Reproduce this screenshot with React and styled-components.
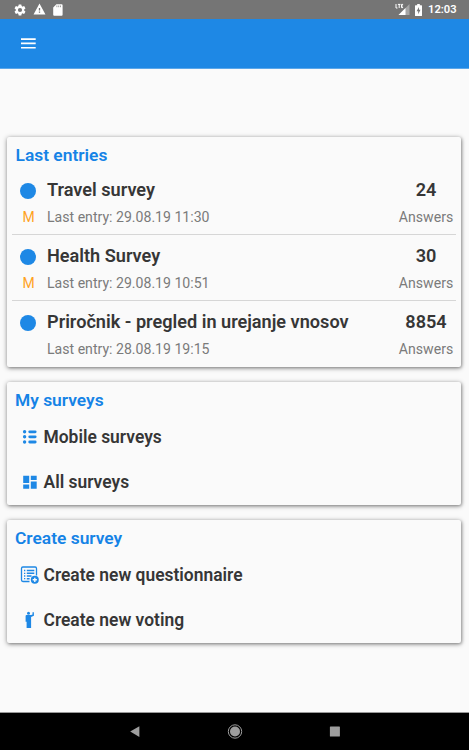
import React from "react";
import styled, { createGlobalStyle } from "styled-components";

const colors = {
    primary: "#1e88e5",
    heading: "#1583e6",
    text: "#363636",
    muted: "#7b7b7b",
    accent: "#ffa21f",
    background: "#fafafa",
    statusBar: "#757575",
};

const entries = [
    { title: "Travel survey", date: "29.08.19 11:30", answers: 24, mobile: true },
    { title: "Health Survey", date: "29.08.19 10:51", answers: 30, mobile: true },
    { title: "Priročnik - pregled in urejanje vnosov", date: "28.08.19 19:15", answers: 8854, mobile: false },
];

const GlobalStyle = createGlobalStyle`
    * {
        box-sizing: border-box;
    }

    body {
        margin: 0;
        background: ${colors.background};
        font-family: Roboto, "Noto Sans", sans-serif;
    }
`;

const Screen = styled.div`
    display: flex;
    flex-direction: column;
    height: 750px;
    overflow: hidden;
`;

const StatusBar = styled.header`
    display: flex;
    justify-content: space-between;
    align-items: center;
    height: 19px;
    padding: 0 13px 0 13px;
    background: ${colors.statusBar};
    color: #fff;

    & svg {
        display: block;
    }
`;

const StatusGroup = styled.div`
    display: flex;
    align-items: center;
    gap: ${(props) => props.$gap}px;
`;

const Clock = styled.span`
    font-size: 11.2px;
    font-weight: 600;
    line-height: 19px;
    width: 28px;
    margin-left: 1px;
    white-space: nowrap;
`;

const AppBar = styled.div`
    display: flex;
    align-items: center;
    height: 50px;
    padding-left: 21px;
    background: ${colors.primary};
    border-bottom: 1px solid #5ba7ea;
`;

const MenuButton = styled.button`
    display: flex;
    padding: 0;
    border: 0;
    background: none;
`;

const Content = styled.main`
    flex: 1;
    display: flex;
    flex-direction: column;
    gap: 15px;
    padding: 68px 8px 0 7px;
`;

const Card = styled.section`
    border-radius: 2px;
    background: ${colors.background};
    box-shadow: 0 1px 5px rgba(0, 0, 0, 0.42), 1px 1px 3px rgba(0, 0, 0, 0.22);
`;

const CardTitle = styled.h2`
    height: ${(props) => props.$height || 33}px;
    margin: 0;
    padding-left: ${(props) => props.$indent || 8}px;
    font-size: 17.4px;
    font-weight: 600;
    line-height: 37px;
    color: ${colors.heading};
`;

const Entry = styled.div`
    display: grid;
    grid-template-columns: 30px 1fr 60px;
    grid-template-rows: 41px 25px;
    height: 66px;
    margin: 0 5px 0 5px;
    border-bottom: 1px solid #d6d6d6;

    &:last-child {
        border-bottom: 0;
    }
`;

const Dot = styled.span`
    width: 16px;
    height: 16px;
    margin: 14px 0 0 8px;
    border-radius: 50%;
    background: ${colors.primary};
`;

const EntryTitle = styled.div`
    padding-left: 5px;
    font-size: 18.14px;
    font-weight: 600;
    line-height: 42px;
    white-space: nowrap;
    color: ${colors.text};
`;

const Count = styled(EntryTitle)`
    padding-left: 0;
    text-align: center;
`;

const Mark = styled.div`
    padding-left: 3px;
    font-size: 14px;
    line-height: 15px;
    text-align: center;
    color: ${colors.accent};
`;

const Detail = styled.div`
    padding-left: 5px;
    font-size: 14.1px;
    line-height: 15px;
    white-space: nowrap;
    color: ${colors.muted};
`;

const AnswersLabel = styled(Detail)`
    padding-left: 0;
    text-align: center;
`;

const MenuItem = styled.div`
    display: flex;
    align-items: center;
    height: 45px;
    padding-left: 13px;
    font-size: 17.43px;
    font-weight: 600;
    line-height: 45px;
    color: ${colors.text};

    & svg {
        width: 20px;
        height: 20px;
        margin-right: 3.5px;
        color: ${colors.primary};
    }
`;

const NavBar = styled.nav`
    display: flex;
    align-items: center;
    justify-content: center;
    gap: 80px;
    height: 38px;
    background: #000;
    border-top: 1px solid #999;
`;

const SettingsIcon = () => (
    <svg width="14" height="14" viewBox="0 0 24 24" fill="currentColor">
        <path d="M19.14 12.94c.04-.3.06-.61.06-.94 0-.32-.02-.64-.07-.94l2.03-1.58a.49.49 0 0 0 .12-.61l-1.92-3.32a.49.49 0 0 0-.59-.22l-2.39.96a7 7 0 0 0-1.62-.94l-.36-2.54a.48.48 0 0 0-.48-.41h-3.84a.48.48 0 0 0-.47.41l-.36 2.54c-.59.24-1.13.57-1.62.94l-2.39-.96a.48.48 0 0 0-.59.22L2.74 8.87a.48.48 0 0 0 .12.61l2.03 1.58a6 6 0 0 0-.02 1.88l-2.03 1.58a.49.49 0 0 0-.12.61l1.92 3.32c.12.22.37.29.59.22l2.39-.96c.5.38 1.03.7 1.62.94l.36 2.54c.05.24.24.41.48.41h3.84c.24 0 .44-.17.47-.41l.36-2.54a7 7 0 0 0 1.62-.94l2.39.96c.22.08.47 0 .59-.22l1.92-3.32a.48.48 0 0 0-.12-.61zM12 15.6a3.6 3.6 0 1 1 0-7.2 3.6 3.6 0 0 1 0 7.2z" />
    </svg>
);

const WarningIcon = () => (
    <svg width="13" height="13" viewBox="0 0 24 24" fill="currentColor">
        <path d="M1 21h22L12 1zM13.2 18.2h-2.4v-2.4h2.4zM13.2 14h-2.4V9h2.4z" fillRule="evenodd" />
    </svg>
);

const SdCardIcon = () => (
    <svg width="11" height="12" viewBox="0 0 11 12">
        <path d="M4.4.3H9.6a1 1 0 0 1 1 1v9.4a1 1 0 0 1-1 1H2.2a1 1 0 0 1-1-1V3.5z" fill="currentColor" />
        <path d="M4.9 1.5v1.7M6.7 1.5v1.7M8.5 1.5v1.7" stroke={colors.statusBar} strokeWidth="0.7" />
    </svg>
);

const SignalIcon = () => (
    <svg width="15" height="13" viewBox="0 0 15 13">
        <path d="M14.5 1v11H3.5z" fill="#a6a6a6" />
        <path d="M10.5 5v7h-7z" fill="#fff" />
        <path d="M1 1v4h1.5M2.9 1.4h2.6M4.2 1v4M8.1 1.4H6.5v3.2h1.6M6.5 3h1.4" fill="none" stroke="#fff" />
    </svg>
);

const BatteryIcon = () => (
    <svg width="7" height="12" viewBox="0 0 7 12">
        <path d="M2.2 0h2.6v1.2H6.4q.6 0 .6.6v9.6q0 .6-.6.6H.6q-.6 0-.6-.6V1.8q0-.6.6-.6h1.6z" fill="#fff" />
        <path d="M4 2.9 1.6 7.2h1.6v3.1l2.3-4.5H4z" fill={colors.statusBar} />
    </svg>
);

const HamburgerIcon = () => (
    <svg width="15" height="12" viewBox="0 0 15 12">
        <path d="M0 1.1h14.7M0 5.4h14.7M0 9.8h14.7" stroke="#fff" strokeWidth="1.6" />
    </svg>
);

const ListIcon = () => (
    <svg viewBox="0 0 20 20" fill="none" stroke="currentColor" strokeLinecap="round">
        <path d="M4.6 3.8h.01M4.6 8.8h.01M4.6 14h.01" strokeWidth="3.4" />
        <path d="M9.7 3.8h5.5M9.7 8.8h5.5M9.7 14h5.5" strokeWidth="2.8" />
    </svg>
);

const DashboardIcon = () => (
    <svg viewBox="0 0 20 20" fill="currentColor">
        <path d="M3.2 2.7h6v7.2h-6zM10.8 2.7h5.9v4.3h-5.9zM3.2 11.6h6v4.2h-6zM10.8 8.6h5.9v7.2h-5.9z" />
    </svg>
);

const QuestionnaireIcon = () => (
    <svg viewBox="0 0 20 20" fill="none" stroke="currentColor">
        <path d="M9.5 15.5H2.9q-1.4 0-1.4-1.4V2.4q0-1.4 1.4-1.4h12.2q1.4 0 1.4 1.4v7" strokeWidth="1.3" />
        <path d="M4 4.5h1.3M4 7.3h1.3M4 10h1.3M4 12.7h1.3" strokeWidth="1.3" />
        <path d="M6.8 4.5h7.5M6.8 7.3h7.5M6.8 10h4.7M6.8 12.7h2.8" strokeWidth="1.5" />
        <circle cx="14.8" cy="13.8" r="4" fill="currentColor" stroke="none" />
        <path d="M14.8 11.7v4.2M12.7 13.8h4.2" stroke="#fafafa" strokeWidth="1.4" />
    </svg>
);

const VotingIcon = () => (
    <svg viewBox="0 0 20 20" fill="currentColor">
        <circle cx="8.5" cy="2.3" r="1.5" />
        <path d="M6.6 4.1h4.6l1.3-.5V1.2h1.4v3.5l-2.8 1.4v11H6.6V10.8H5.6V5.1q0-1 1-1z" />
    </svg>
);

const BackIcon = () => (
    <svg width="20" height="20" viewBox="0 0 20 20">
        <path d="M5.2 9.5 14.4 4.3v10.6z" fill="#9e9e9e" />
    </svg>
);

const HomeIcon = () => (
    <svg width="20" height="20" viewBox="0 0 20 20">
        <circle cx="10" cy="9.5" r="6.7" fill="none" stroke="#9e9e9e" />
        <circle cx="10" cy="9.5" r="5" fill="#9e9e9e" />
    </svg>
);

const RecentIcon = () => (
    <svg width="20" height="20" viewBox="0 0 20 20">
        <rect x="4.9" y="4.5" width="10" height="10" rx="0.6" fill="#9e9e9e" />
    </svg>
);

function SurveyEntry({ data }) {
    return (
        <Entry>
            <Dot />
            <EntryTitle>{data.title}</EntryTitle>
            <Count>{data.answers}</Count>
            <Mark>{data.mobile && "M"}</Mark>
            <Detail>Last entry: {data.date}</Detail>
            <AnswersLabel>Answers</AnswersLabel>
        </Entry>
    );
}

function App() {
    return (
        <Screen>
            <GlobalStyle />
            <StatusBar>
                <StatusGroup $gap={6}>
                    <SettingsIcon />
                    <WarningIcon />
                    <SdCardIcon />
                </StatusGroup>
                <StatusGroup $gap={5}>
                    <SignalIcon />
                    <BatteryIcon />
                    <Clock>12:03</Clock>
                </StatusGroup>
            </StatusBar>
            <AppBar>
                <MenuButton aria-label="Menu">
                    <HamburgerIcon />
                </MenuButton>
            </AppBar>
            <Content>
                <Card>
                    <CardTitle $height={32} $indent={8.5}>Last entries</CardTitle>
                    {entries.map((entry) => (
                        <SurveyEntry key={entry.title} data={entry} />
                    ))}
                </Card>
                <Card>
                    <CardTitle>My surveys</CardTitle>
                    <MenuItem><ListIcon />Mobile surveys</MenuItem>
                    <MenuItem><DashboardIcon />All surveys</MenuItem>
                </Card>
                <Card>
                    <CardTitle>Create survey</CardTitle>
                    <MenuItem><QuestionnaireIcon />Create new questionnaire</MenuItem>
                    <MenuItem><VotingIcon />Create new voting</MenuItem>
                </Card>
            </Content>
            <NavBar>
                <BackIcon />
                <HomeIcon />
                <RecentIcon />
            </NavBar>
        </Screen>
    );
}

export default App;
